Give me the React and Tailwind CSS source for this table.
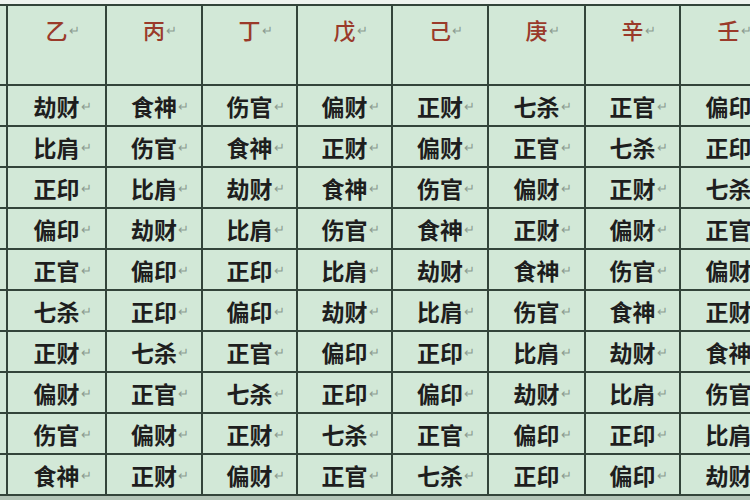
import React from "react";

const heads = ["乙", "丙", "丁", "戊", "己", "庚", "辛", "壬"];
const rows = [
  ["劫财", "食神", "伤官", "偏财", "正财", "七杀", "正官", "偏印"],
  ["比肩", "伤官", "食神", "正财", "偏财", "正官", "七杀", "正印"],
  ["正印", "比肩", "劫财", "食神", "伤官", "偏财", "正财", "七杀"],
  ["偏印", "劫财", "比肩", "伤官", "食神", "正财", "偏财", "正官"],
  ["正官", "偏印", "正印", "比肩", "劫财", "食神", "伤官", "偏财"],
  ["七杀", "正印", "偏印", "劫财", "比肩", "伤官", "食神", "正财"],
  ["正财", "七杀", "正官", "偏印", "正印", "比肩", "劫财", "食神"],
  ["偏财", "正官", "七杀", "正印", "偏印", "劫财", "比肩", "伤官"],
  ["伤官", "偏财", "正财", "七杀", "正官", "偏印", "正印", "比肩"],
  ["食神", "正财", "偏财", "正官", "七杀", "正印", "偏印", "劫财"],
];

// word paragraph mark after each cell's text
const Mark = () => (
  <span className="absolute left-full top-[7px] ml-[1px] text-[13px] font-normal leading-none text-[#8c9c90]">↵</span>
);

const App = () => {
  return (
    <div
      className="w-[750px] h-[500px] overflow-hidden bg-[#eef3ef] pt-[4px]"
      style={{ fontFamily: '"Noto Sans CJK SC", "Noto Sans", sans-serif' }}
    >
      <div className="grid w-[776px] grid-cols-[6px_97px_94px_93px_93px_94px_95px_93px_95px] grid-rows-[78px_repeat(10,39px)] gap-[2px] bg-[#33443a] py-[2px]">
        <div className="bg-[#d2e8d7]" />
        {heads.map((h) => (
          <div key={h} className="flex items-start justify-center bg-[#d2e8d7] pt-[10px]">
            <span className="relative text-[22px] font-medium leading-[26px] text-[#9a3a2a]">
              {h}
              <Mark />
            </span>
          </div>
        ))}
        {rows.map((r, i) => (
          <React.Fragment key={i}>
            <div className="bg-[#d2e8d7]" />
            {r.map((c, j) => (
              <div key={j} className="flex items-center justify-center bg-[#d2e8d7]">
                <span className="relative text-[23px] font-semibold leading-[28px] text-[#1e1e1e]">
                  {c}
                  <Mark />
                </span>
              </div>
            ))}
          </React.Fragment>
        ))}
      </div>
      <div className="h-[10px] bg-[#b3c4b7]" />
    </div>
  );
};

export default App;
